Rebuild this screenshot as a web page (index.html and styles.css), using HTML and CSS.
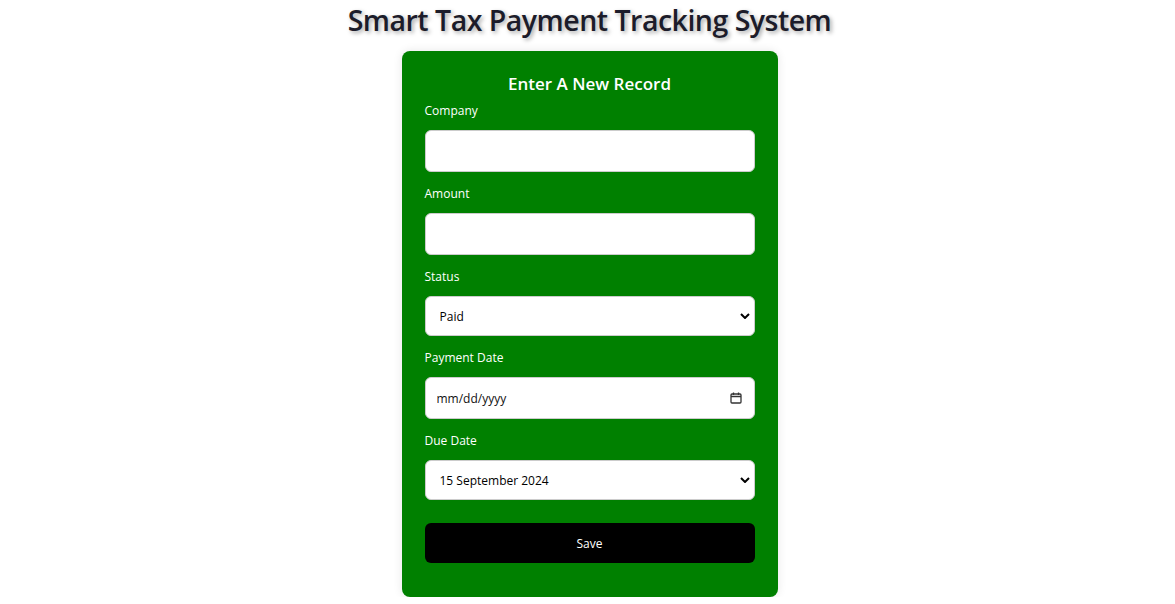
FILE: index.html
```html
<!DOCTYPE html>
<html lang="en">
<head>
<meta charset="utf-8">
<title>Smart Tax Payment Tracking System</title>
<link rel="stylesheet" href="styles.css">
</head>
<body>
<h1 class="title">Smart Tax Payment Tracking System</h1>
<form class="card">
  <h2 class="card-title">Enter A New Record</h2>
  <div class="field">
    <label class="label" for="company">Company</label>
    <input class="control" id="company" type="text">
  </div>
  <div class="field">
    <label class="label" for="amount">Amount</label>
    <input class="control" id="amount" type="text">
  </div>
  <div class="field">
    <label class="label" for="status">Status</label>
    <div class="select-wrap">
      <select class="control select" id="status">
        <option>Paid</option>
        <option>Unpaid</option>
      </select>
      <svg class="chevron" viewBox="0 0 10 6" width="10" height="6"><path d="M1 1l4 4 4-4" fill="none" stroke="#000" stroke-width="2"/></svg>
    </div>
  </div>
  <div class="field">
    <label class="label" for="pdate">Payment Date</label>
    <div class="select-wrap">
      <input class="control date" id="pdate" type="text" value="mm/dd/yyyy" readonly>
      <svg class="cal" viewBox="0 0 12 12" width="12" height="12"><rect x="1" y="2" width="10" height="9" rx="1" fill="none" stroke="#333" stroke-width="1.3"/><path d="M1 4.5h10" stroke="#333" stroke-width="1.5"/><path d="M3.5 0.5v2.5M8.5 0.5v2.5" stroke="#333" stroke-width="1.3"/></svg>
    </div>
  </div>
  <div class="field">
    <label class="label" for="ddate">Due Date</label>
    <div class="select-wrap">
      <select class="control select" id="ddate">
        <option>15 September 2024</option>
      </select>
      <svg class="chevron" viewBox="0 0 10 6" width="10" height="6"><path d="M1 1l4 4 4-4" fill="none" stroke="#000" stroke-width="2"/></svg>
    </div>
  </div>
  <button class="save" type="button">Save</button>
</form>
</body>
</html>
```
FILE: styles.css
```css
html, body {
  margin: 0;
  padding: 0;
  background: #fff;
}
body {
  font-family: "Open Sans", "Noto Sans", sans-serif;
  display: flex;
  flex-direction: column;
  align-items: center;
  padding-left: 4px;
}
.title {
  margin: 0;
  padding-top: 1px;
  font-size: 28.5px;
  line-height: 38px;
  font-weight: 600;
  color: #1c1c2a;
  text-shadow: 2px 2px 4px rgba(0,0,0,0.35);
  letter-spacing: -0.5px;
}
.card {
  margin-top: 12px;
  width: 330px;
  padding: 21px 23px 34px;
  background: #008000;
  border-radius: 8px;
  box-shadow: 0 0 10px rgba(0,0,0,0.1);
  display: flex;
  flex-direction: column;
  gap: 13px;
}
.card-title {
  margin: 0 0 -7px;
  text-align: center;
  color: #fff;
  font-size: 17px;
  line-height: 24px;
  font-weight: 600;
}
.field {
  display: flex;
  flex-direction: column;
  gap: 11px;
}
.label {
  color: #fff;
  font-size: 12px;
  line-height: 16px;
  padding-top: 1px;
}
.control {
  box-sizing: border-box;
  width: 100%;
  height: 42px;
  margin: 0;
  border: 1px solid #ccc;
  border-radius: 6px;
  background: #fff;
  font-family: inherit;
  font-size: 12px;
  color: #000;
  padding: 0 12px;
  outline: none;
}
.select-wrap {
  position: relative;
}
.select {
  height: 40px;
  appearance: none;
  -webkit-appearance: none;
  padding-left: 14px;
}
.date {
  padding-left: 11px;
  color: #111;
}
.chevron {
  position: absolute;
  right: 5px;
  top: 17px;
  pointer-events: none;
}
.cal {
  position: absolute;
  right: 13px;
  top: 15px;
  pointer-events: none;
}
.save {
  margin-top: 10px;
  height: 40px;
  border: none;
  border-radius: 6px;
  background: #000;
  color: #fff;
  font-family: inherit;
  font-size: 12px;
}
```
